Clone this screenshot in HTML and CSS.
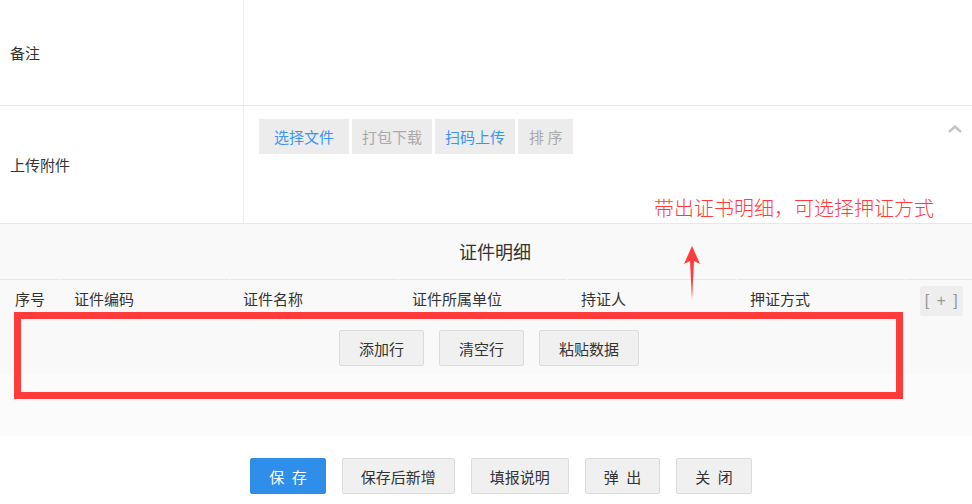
FILE: index.html
```html
<!DOCTYPE html>
<html lang="zh-CN">
<head>
    <meta charset="UTF-8">
    <meta name="viewport" content="width=device-width, initial-scale=1.0">
    <title>证件明细</title>
    <link rel="stylesheet" href="styles.css">
</head>
<body>
    <div class="page">
        <div class="form-row row-remark">
            <div class="label">备注</div>
            <div class="field"></div>
        </div>

        <div class="form-row row-upload">
            <div class="label">上传附件</div>
            <div class="field upload-field">
                <div class="file-buttons">
                    <button class="file-btn wide active">选择文件</button>
                    <button class="file-btn muted">打包下载</button>
                    <button class="file-btn active">扫码上传</button>
                    <button class="file-btn muted sort">排 序</button>
                </div>
                <svg class="chevron" width="14" height="8" viewBox="0 0 14 8">
                    <path d="M1 7 L7 1.5 L13 7" fill="none" stroke="#c4c4c4" stroke-width="2.4"/>
                </svg>
            </div>
        </div>

        <div class="detail">
            <div class="detail-title">证件明细</div>
            <div class="grid-head">
                <div class="cell col-index">序号</div>
                <div class="cell">证件编码</div>
                <div class="cell">证件名称</div>
                <div class="cell">证件所属单位</div>
                <div class="cell">持证人</div>
                <div class="cell">押证方式</div>
                <div class="cell col-add"><button class="add-btn">[ + ]</button></div>
            </div>
            <div class="grid-body">
                <button class="grid-btn">添加行</button>
                <button class="grid-btn">清空行</button>
                <button class="grid-btn">粘贴数据</button>
            </div>
            <div class="detail-foot"></div>
        </div>

        <div class="actions">
            <button class="btn primary">保&ensp;存</button>
            <button class="btn">保存后新增</button>
            <button class="btn">填报说明</button>
            <button class="btn">弹&ensp;出</button>
            <button class="btn">关&ensp;闭</button>
        </div>

        <!-- annotation overlay -->
        <div class="note">带出证书明细，可选择押证方式</div>
        <svg class="note-arrow" width="16" height="54" viewBox="0 0 16 54">
            <polygon points="8,0 16,18 10,15 8,54 6,15 0,18" fill="#ff3b3b"/>
        </svg>
        <div class="note-box"></div>
    </div>
</body>
</html>
```

FILE: styles.css
```css
:root {
    --border: #e8e8e8;
    --text: #333333;
    --blue: #2f8ee9;
    --link: #3a96f5;
    --red: #ff3b3b;
}

* {
    box-sizing: border-box;
}

body {
    margin: 0;
    font-family: "Noto Sans CJK SC", "Noto Sans", sans-serif;
    font-size: 15px;
    color: var(--text);
    background: #ffffff;
}

.page {
    position: relative;
    width: 972px;
    height: 504px;
    overflow: hidden;
}

button {
    font-family: inherit;
    font-size: 15px;
    cursor: pointer;
}

.form-row {
    display: flex;
    border-bottom: 1px solid var(--border);
}

.row-remark {
    height: 106px;
}

.row-upload {
    height: 118px;
}

.label {
    width: 244px;
    flex-shrink: 0;
    padding-left: 10px;
    border-right: 1px solid #eeeeee;
    display: flex;
    align-items: center;
}

.field {
    flex: 1;
}

.upload-field {
    display: flex;
    justify-content: space-between;
    padding: 13px 10px 0 15px;
}

.file-buttons {
    display: flex;
    gap: 3px;
    height: 35px;
}

.file-btn {
    height: 35px;
    padding: 0 10px;
    border: none;
    background: #ececec;
}

.file-btn.wide {
    padding: 0 15px;
}

.file-btn.sort {
    padding: 0 11px;
}

.file-btn.active {
    color: var(--link);
}

.file-btn.muted {
    color: #aaaaaa;
}

.chevron {
    margin-top: 6px;
}

.detail {
    background: #f9f9f9;
}

.detail-title {
    height: 55px;
    line-height: 55px;
    text-align: center;
    font-size: 18px;
    padding-left: 18px;
}

.grid-head {
    display: flex;
    gap: 1px;
    height: 40px;
}

.cell {
    width: 168px;
    border-top: 1px solid #e6e6e6;
    padding: 9px 0 0 13px;
    line-height: 20px;
}

.cell.col-index {
    width: 60px;
    padding-left: 15px;
}

.cell.col-add {
    flex: 1;
    padding: 6px 8px 0 14px;
}

.add-btn {
    width: 43px;
    height: 30px;
    border: none;
    border-radius: 3px;
    background: #eeeeee;
    color: #999999;
    font-family: "Liberation Sans", sans-serif;
    font-size: 16px;
    letter-spacing: 1.5px;
    padding: 0 0 0 1px;
}

.grid-body {
    display: flex;
    justify-content: center;
    gap: 15px;
    height: 55px;
    padding-top: 11px;
    padding-left: 6px;
}

.grid-btn {
    height: 36px;
    padding: 0 19px;
    background: #f0f0f0;
    border: 1px solid #dcdcdc;
    border-radius: 2px;
    color: var(--text);
}

.detail-foot {
    height: 62px;
    background: #fbfbfb;
}

.actions {
    display: flex;
    justify-content: center;
    gap: 16px;
    padding: 22px 0 0 30px;
}

.btn {
    height: 36px;
    min-width: 74px;
    padding: 0 18px;
    background: #f0f0f0;
    border: 1px solid #dcdcdc;
    border-radius: 2px;
    color: var(--text);
}

.btn.primary {
    background: var(--blue);
    border-color: var(--blue);
    color: #ffffff;
}

.note {
    position: absolute;
    left: 654px;
    top: 194px;
    font-size: 20px;
    line-height: 28px;
    color: var(--red);
    font-weight: 300;
}

.note-arrow {
    position: absolute;
    left: 684px;
    top: 246px;
}

.note-box {
    position: absolute;
    left: 14px;
    top: 312px;
    width: 889px;
    height: 87px;
    border: 7px solid var(--red);
}
```
